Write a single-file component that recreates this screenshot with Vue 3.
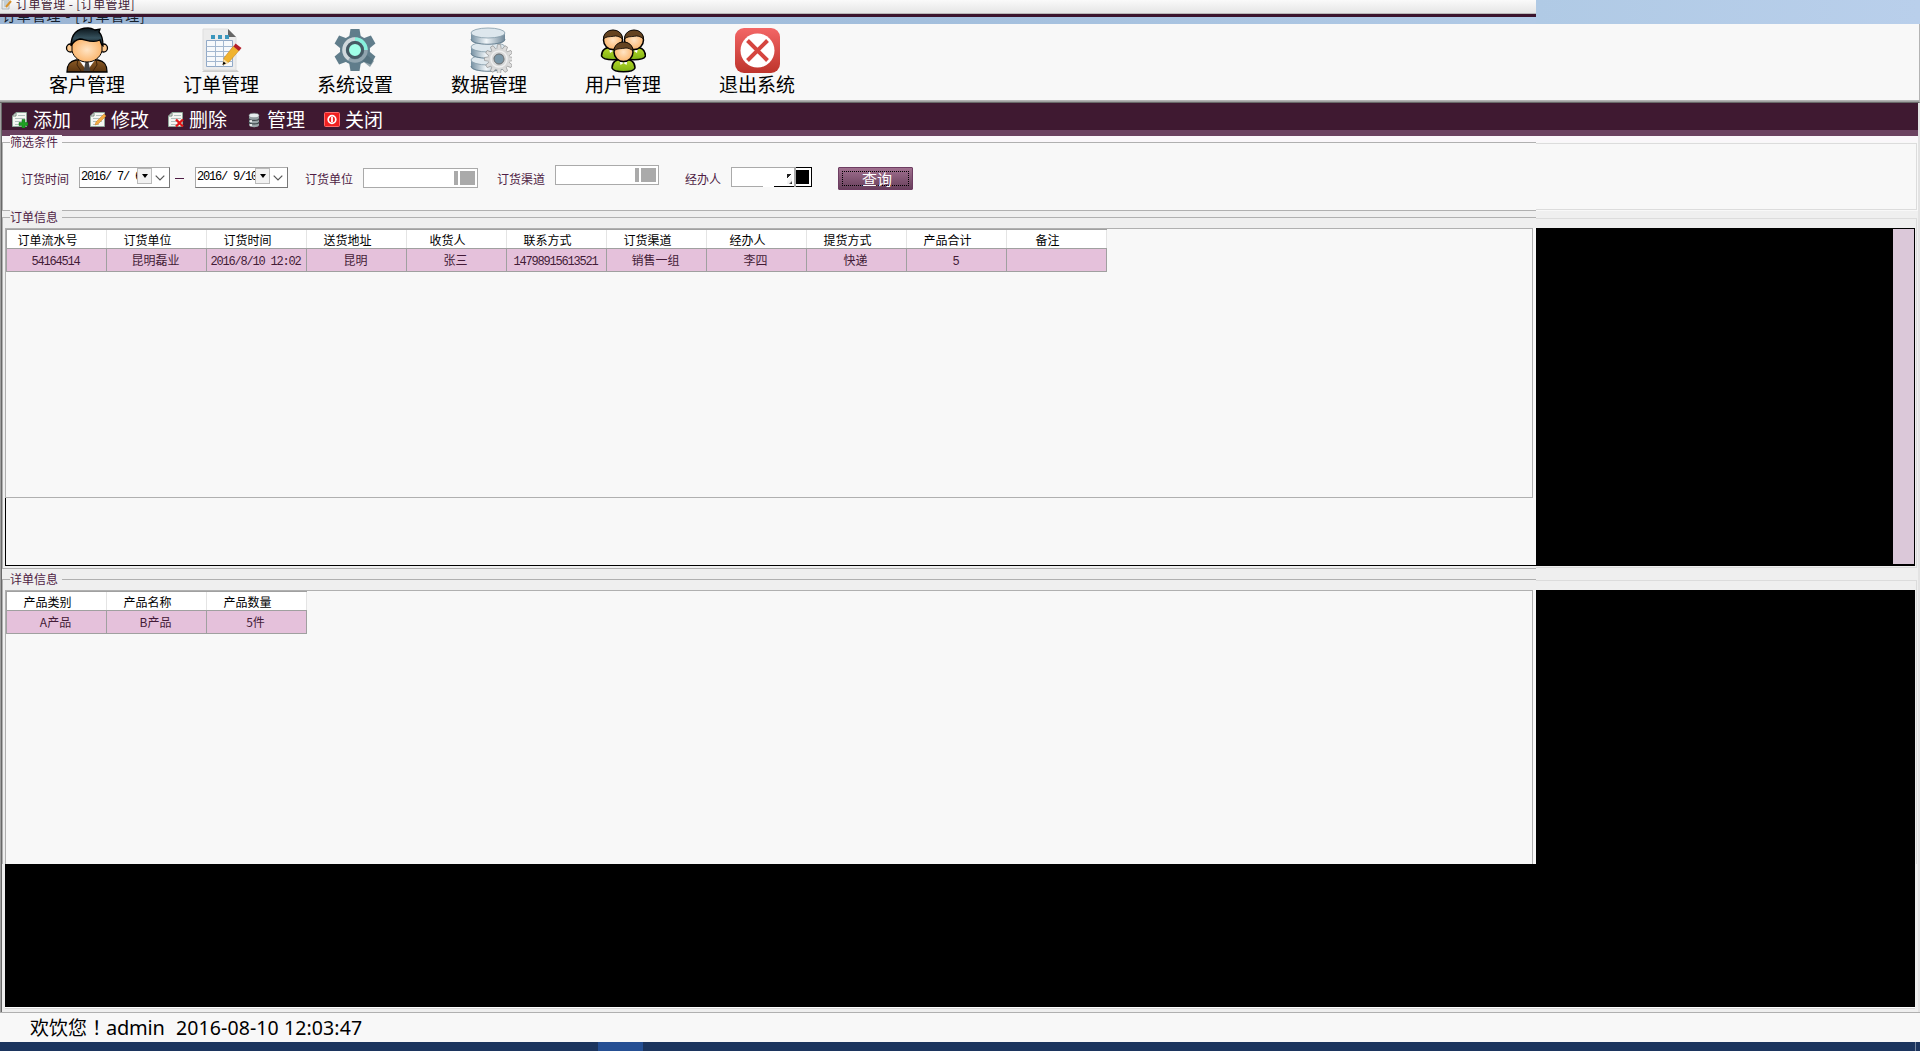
<script setup>
const nav = [
  { id: 'customer', label: '客户管理' },
  { id: 'order', label: '订单管理' },
  { id: 'setting', label: '系统设置' },
  { id: 'data', label: '数据管理' },
  { id: 'users', label: '用户管理' },
  { id: 'exit', label: '退出系统' }
]
const tools = [
  { id: 'add', label: '添加' },
  { id: 'edit', label: '修改' },
  { id: 'del', label: '删除' },
  { id: 'db', label: '管理' },
  { id: 'close', label: '关闭' }
]
const orderCols = ['订单流水号', '订货单位', '订货时间', '送货地址', '收货人', '联系方式', '订货渠道', '经办人', '提货方式', '产品合计', '备注']
const orderRow = ['54164514', '昆明磊业', '2016/8/10 12:02', '昆明', '张三', '14798915613521', '销售一组', '李四', '快递', '5', '']
const detailCols = ['产品类别', '产品名称', '产品数量']
const detailRow = ['A产品', 'B产品', '5件']
const isMono = (t) => /^[\x20-\x7e]+$/.test(t)
const teeth = [0, 60, 120, 180, 240, 300]
const cogs = [0, 30, 60, 90, 120, 150, 180, 210, 240, 270, 300, 330]
</script>

<template>
  <div class="app">
    <header class="top">
      <div class="caption">
        <div class="bar">
          <svg class="capicon" width="11" height="10" viewBox="0 0 11 10"><path d="M1 0h7v9H1z" fill="#e3e6e8" stroke="#9aa3a9" stroke-width=".7" /><path d="M3 2h4M3 4h4M3 6h3" stroke="#8fa9b8" stroke-width=".8" /><path d="M10 1L5 7" stroke="#d8922a" stroke-width="2" /></svg>
          <span class="captext">订单管理 - [订单管理]</span>
        </div>
        <div class="ghost"><span>订单管理 - [订单管理]</span></div>
      </div>
      <div class="sky"></div>
    </header>

    <nav class="ribbon">
      <div v-for="n in nav" :key="n.id" class="navitem">
        <svg width="46" height="46" viewBox="0 0 46 46">
          <defs>
            <linearGradient id="hair" x2="0" y2="1"><stop stop-color="#0b151b" /><stop offset=".55" stop-color="#35505c" /><stop offset="1" stop-color="#0a1015" /></linearGradient>
            <radialGradient id="skin"><stop stop-color="#ffe4c4" /><stop offset="1" stop-color="#fbb76f" /></radialGradient>
            <linearGradient id="suit" x2="0" y2="1"><stop stop-color="#8a5a26" /><stop offset="1" stop-color="#5b3510" /></linearGradient>
            <linearGradient id="drum"><stop stop-color="#7590a2" /><stop offset=".45" stop-color="#f2f7fa" /><stop offset="1" stop-color="#6f8798" /></linearGradient>
            <linearGradient id="green" x2="0" y2="1"><stop stop-color="#b9dc2c" /><stop offset="1" stop-color="#7eb012" /></linearGradient>
            <linearGradient id="red" x2="0" y2="1"><stop stop-color="#f36666" /><stop offset="1" stop-color="#be342c" /></linearGradient>
          </defs>
          <g v-if="n.id === 'customer'" stroke="#000" stroke-width="1.3">
            <path d="M3 45c0-8 3-11 9-12h22c6 1 9 4 9 12z" fill="url(#suit)" />
            <path d="M15 33l8 11 8-11z" fill="#fff" stroke="none" />
            <path d="M21.500 35h3l2 9h-7z" fill="#444" stroke="none" />
            <path d="M14 32l-1 6 4 6M32 32l1 6-4 6" fill="none" stroke="#3c220a" stroke-width="1" />
            <circle cx="6.500" cy="21" r="4" fill="#fdc88d" /><circle cx="39.500" cy="21" r="4" fill="#fdc88d" />
            <path d="M8 16c0-7 30-7 30 0v8c-2 7-8 11-15 11S10 31 8 24z" fill="url(#skin)" stroke-width="1" />
            <path d="M7 19C7 7 13 1 24 1c3 0 5 1 7 2l5-1-1 3c3 3 4 7 4 14-2-1-2-3-3-6-8 4-15-1-20-1-5 1-7 3-9 7z" fill="url(#hair)" />
          </g>
          <g v-else-if="n.id === 'order'">
            <path d="M6 43h33l2 2H4z" fill="#ccc" />
            <path d="M5 2h25l8 8v33H5z" fill="#ececec" stroke="#dedede" />
            <path d="M30 2l8 8h-8z" fill="#666" />
            <path d="M13 8h4v4h-4zM20 8h4v4h-4zM27 8h4v4h-4z" fill="#3c97bd" />
            <path d="M8.500 13.500h26v26h-26z" fill="#f7f9fb" stroke="#91a9c7" />
            <path d="M8.500 19.500h26M8.500 24.500h26M8.500 29.500h26M8.500 34.500h26M17.500 13.500v26M25.500 13.500v26" fill="none" stroke="#a4b8d0" />
            <path d="M35.500 19l5.500 4.500-10 11.500-6 3 1-7z" fill="#f0b32e" stroke="#c9871c" stroke-width=".6" />
            <path d="M25.500 32l5 4-5.500 2z" fill="#f6dfb0" /><path d="M25.500 34.500l2.500 2-3.500 1.500z" fill="#000" />
            <path d="M37.500 16.500l6 4.500-2.500 3-5.500-4.500z" fill="#b5202a" />
          </g>
          <g v-else-if="n.id === 'setting'">
            <path v-for="a in teeth" :key="a" d="M18.500 2h9l2 12h-13z" fill="#607d8b" :transform="`rotate(${a} 23 23)`" />
            <circle cx="23" cy="23" r="15" fill="#607d8b" />
            <path d="M28 32l10 8 4-6-7-6z" fill="#4f6b78" opacity=".6" />
            <circle cx="23" cy="23" r="11" fill="none" stroke="#90a4ae" stroke-width="3.500" />
            <path d="M12 23a11 11 0 0 1 11-11" fill="none" stroke="#cfd8dc" stroke-width="3.500" />
            <path d="M12 23a11 11 0 0 0 5 9" fill="none" stroke="#cfd8dc" stroke-width="3.500" />
            <path d="M23 12a11 11 0 0 1 11 11" fill="none" stroke="#86f0dc" stroke-width="3.500" />
            <circle cx="23" cy="23" r="7.500" fill="#a0ffe8" stroke="#455a64" stroke-width="3" />
          </g>
          <g v-else-if="n.id === 'data'">
            <g v-for="y in [28, 15, 1]" :key="y">
              <path :d="`M5 ${y + 5}v7c0 6 34 6 34 0v-7z`" fill="url(#drum)" />
              <ellipse cx="22" :cy="y + 5" rx="17" ry="5" fill="#dde7ed" stroke="#8299a7" stroke-width=".8" />
              <path :d="`M5 ${y + 11}c0 7 34 7 34 0`" fill="none" stroke="#688192" />
            </g>
            <g transform="translate(33 32)">
              <path v-for="a in cogs" :key="a" d="M-1.500-14.500h3l1 6h-5z" fill="#dcdcdc" stroke="#8a8a8a" stroke-width=".6" :transform="`rotate(${a})`" />
              <circle r="8" fill="none" stroke="#d7d7d7" stroke-width="5" />
              <circle r="5" fill="#7b97a8" stroke="#707070" /><circle r="8" fill="none" stroke="#efefef" stroke-width="1.500" />
            </g>
          </g>
          <g v-else-if="n.id === 'users'">
            <g v-for="p in [[13, 13], [34, 13], [23.5, 25]]" :key="p.join()" :transform="`translate(${p[0]} ${p[1]})`" stroke="#000" stroke-width="1.500">
              <path d="M-11.500 16c0-7 5-9 11.500-9s11.500 2 11.500 9c-2 5-21 5-23 0z" fill="url(#green)" />
              <path d="M-4 8l4 3 4-3-1 5-3-2-3 2z" fill="#fff" stroke="none" />
              <ellipse cy="0" rx="9.500" ry="9.500" fill="url(#skin)" />
              <path d="M-9.500-1c0-12 19-12 19 0-2-2-5-3-7-3-5 1-9 0-12 3z" fill="#644320" stroke-width=".8" />
            </g>
          </g>
          <g v-else>
            <rect x="1" y="1" width="45" height="45" rx="9" fill="url(#red)" />
            <circle cx="23.500" cy="23.500" r="17" fill="#fff" />
            <path d="M13.500 13.500l20 20M33.500 13.500l-20 20" stroke="#d5453f" stroke-width="4" />
          </g>
        </svg>
        <span>{{ n.label }}</span>
      </div>
    </nav>

    <main class="work">
      <div class="toolbar">
        <div v-for="t in tools" :key="t.id" class="tool">
          <svg width="16" height="16" viewBox="0 0 16 16">
            <g v-if="t.id === 'db'">
              <path d="M3 3v10c0 3 10 3 10 0V3z" fill="#9aa5a9" /><ellipse cx="8" cy="3.500" rx="5" ry="2.300" fill="#e6ecee" stroke="#6d777b" stroke-width=".6" />
              <path d="M3 6.500c0 2.500 10 2.500 10 0M3 10c0 2.500 10 2.500 10 0" fill="none" stroke="#3f494d" stroke-width="1.300" /><path d="M5 8v2M5 12v2" stroke="#fff" stroke-width="1.500" />
            </g>
            <g v-else-if="t.id === 'close'">
              <rect x=".5" y=".5" width="15" height="14" rx="1" fill="#f02020" stroke="#ff6a6a" /><circle cx="8" cy="7.500" r="3.800" fill="none" stroke="#fff" stroke-width="1.700" /><path d="M8 5v5" stroke="#fff" stroke-width="1.800" />
            </g>
            <g v-else>
              <path d="M4 .5h10.500v14H.500V4z" fill="#f4f6f2" stroke="#8fa79a" /><path d="M4 1v3H1" fill="none" stroke="#73877b" />
              <path d="M6 3.500h7M3 6.500h10M3 9.500h9M3 12.500h6" stroke="#b1c0bd" />
              <path v-if="t.id === 'add'" d="M10 7.500h3v3h3v3h-3V16h-3v-2.500H7v-3h3z" fill="#1e9e22" stroke="#0b6b12" stroke-width=".5" />
              <path v-if="t.id === 'edit'" d="M5 13l1-3 8-8 2 2-8 8z" fill="#f5ad43" stroke="#c97a1d" stroke-width=".5" />
              <path v-if="t.id === 'del'" d="M8 7.500l7 7M15 7.500l-7 7" stroke="#e01818" stroke-width="2.400" />
            </g>
          </svg>
          <span>{{ t.label }}</span>
        </div>
      </div>

      <section class="band filterband">
        <div class="group filter">
          <span class="legend">筛选条件</span>
          <div class="fields">
            <label class="l1">订货时间</label>
            <div class="date d1"><span>2016/ 7/ 6</span><i class="drop"></i><svg width="10" height="6" viewBox="0 0 10 6"><path d="M.7.7L5 5 9.300.7" fill="none" stroke="#555" stroke-width="1.200" /></svg></div>
            <i class="dash"></i>
            <div class="date d2"><span>2016/ 9/10</span><i class="drop"></i><svg width="10" height="6" viewBox="0 0 10 6"><path d="M.7.7L5 5 9.300.7" fill="none" stroke="#555" stroke-width="1.200" /></svg></div>
            <label class="l2">订货单位</label>
            <div class="combo c1"><i class="thin"></i><i class="block"></i></div>
            <label class="l3">订货渠道</label>
            <div class="combo c2"><i class="thin"></i><i class="block"></i></div>
            <label class="l4">经办人</label>
            <div class="combo c3"><div class="cleft"><i class="bit"></i></div><div class="cright"><i class="block"></i></div></div>
            <button class="query"><span>查询</span></button>
          </div>
        </div>
        <div class="rest"></div>
      </section>

      <section class="band orderband">
        <div class="group">
          <span class="legend">订单信息</span>
          <div class="list">
            <div class="table">
              <div class="row head"><span v-for="c in orderCols" :key="c">{{ c }}</span></div>
              <div class="row body"><span v-for="(c, i) in orderRow" :key="i"><b :class="{ mono: isMono(c) }">{{ c }}</b></span></div>
            </div>
          </div>
          <div class="under"></div>
        </div>
        <div class="rest"><div class="void"><i class="strip"></i></div></div>
      </section>

      <section class="band detailband">
        <div class="group">
          <span class="legend">详单信息</span>
          <div class="list">
            <div class="table">
              <div class="row head"><span v-for="c in detailCols" :key="c">{{ c }}</span></div>
              <div class="row body"><span v-for="c in detailRow" :key="c"><b>{{ c }}</b></span></div>
            </div>
          </div>
        </div>
        <div class="rest"><div class="void"></div></div>
      </section>
      <div class="pit"></div>
    </main>

    <footer class="status"><span class="hello">欢饮您<em>！</em></span><span class="who">admin</span><span class="clock">2016-08-10 12:03:47</span></footer>
    <div class="taskbar"><i class="active"></i><i class="peek"></i></div>
  </div>
</template>

<style>
body { margin: 0; overflow: hidden; }
</style>

<style scoped>
* { box-sizing: border-box; }
.app { width: 1920px; height: 1051px; display: flex; flex-direction: column; background: #f8f8f8; color: #000; font: 12px/14px "Noto Sans CJK SC", sans-serif; overflow: hidden; white-space: nowrap; }
i { display: block; font-style: normal; flex: none; }
b { font-weight: 400; }

.top { display: flex; height: 24px; }
.caption { width: 1536px; }
.bar { height: 17px; display: flex; background: linear-gradient(#fafafa, #e7e7e7 12px, #e7e7e7 13px, #b9b9b9 13px, #b9b9b9 14px, #3b142d 14px); overflow: hidden; }
.capicon { margin: 0 0 0 1px; }
.captext { margin: -4px 0 0 4px; font-size: 12px; line-height: 16px; color: #431b37; height: 16px; letter-spacing: .4px; }
.ghost { height: 7px; overflow: hidden; background: linear-gradient(90deg, #9bb5d4, #a3bfdd 60%, #b1cae6); }
.ghost span { display: block; margin: -10px 0 0 2px; font-size: 14px; line-height: 16px; color: #15202c; letter-spacing: .85px; }
.sky { flex: 1; background: linear-gradient(90deg, #b0cae5, #b9cfeb); }

.ribbon { display: flex; height: 79px; padding-left: 20px; border-bottom: 1px solid #696969; background: linear-gradient(#f8f8f8 76px, #b4b4b4 76px, #b4b4b4 77px, #a0a0a0 77px); border-right: 1px solid #b4b4b4; }
.navitem { width: 134px; display: flex; flex-direction: column; align-items: center; padding-top: 3px; }
.navitem span { font-size: 19px; line-height: 26px; margin-top: -2px; }

.work { height: 909px; border-left: 1px solid #a0a0a0; background: #efefef; box-shadow: inset 1px 0 #696969, inset -2px 0 #e3e3e3; padding-left: 1px; }
.toolbar { height: 33px; width: 1916px; display: flex; padding-left: 10px; background: #3f1931; border-bottom: 6px solid #6b4260; }
.tool { width: 78px; display: flex; color: #fff; font-size: 19px; font-weight: 400; line-height: 32px; }
.tool svg { margin: 9px 5px 0 0; flex: none; }

.band { display: flex; }
.group { width: 1534px; border: solid #b0b0b0; border-width: 1px 0 1px 1px; }
.legend { display: block; width: 52px; height: 14px; margin: -8px 0 -6px 7px; line-height: 14px; color: #4f1d45; position: relative; background: #efefef; }
.rest { width: 381px; border: solid #dcdcdc; border-width: 1px 1px 1px 0; }
.filterband { height: 75px; background: #f8f8f8; padding-top: 6px; box-shadow: inset 0 6px #faf7fa; width: 1916px; }
.filterband .legend { background: #f9f8f9; }
.filterband .rest { margin: 1px 0; height: 67px; }

.fields { display: flex; align-items: flex-start; color: #4f1d45; padding-top: 24px; }
.fields label { margin: 5px 0 0 -1px; width: 49px; flex: none; }
.fields .l1 { margin-left: 18px; }
.date { height: 21px; border: 1px solid #777; border-top-color: #aaa; border-left-color: #aaa; background: #fff; color: #000; display: flex; flex: none; overflow: hidden; }
.date span { width: 57px; padding-left: 1px; overflow: hidden; white-space: pre; font: 12px/19px "Liberation Mono", monospace; letter-spacing: -1.2px; }
.date svg { margin: 7px 0 0 3px; }
.d1 { width: 91px; margin-left: 9px; }
.d2 { width: 93px; margin-left: 11px; }
.d2 span { width: 59px; }
.drop { width: 15px; height: 16px; border: 1px solid #bbb; background: #f2f2f2; display: flex; justify-content: center; }
.drop::after { content: ""; margin-top: 5px; height: 0; border: 3px solid transparent; border-top: 4px solid #000; border-bottom: 0; }
.dash { width: 9px; height: 1px; margin: 11px 0 0 5px; background: #4f1d45; }
.fields .l2 { margin-left: 17px; }
.combo { background: #fff; border: 1px solid #aaa; height: 20px; display: flex; justify-content: flex-end; flex: none; }
.thin { width: 4px; height: 14px; background: #aaa; margin: 2px 2px 0 0; }
.block { width: 15px; height: 14px; background: #aaa; margin: 2px 2px 0 0; }
.c1 { width: 115px; margin: 1px 0 0 9px; }
.fields .l3 { margin-left: 19px; }
.c2 { width: 104px; margin: -2px 0 0 9px; }
.fields .l4 { margin-left: 26px; width: 37px; }
.c3 { width: 81px; margin-left: 9px; border: 0; justify-content: flex-start; }
.cleft { width: 65px; height: 20px; border: 1px solid #aaa; border-bottom: 0; background: linear-gradient(90deg, #aaa 31px, #fff 31px, #fff 42px, #000 42px) bottom / 100% 1px no-repeat #fff; border-right: 2px solid #aaa; display: flex; justify-content: flex-end; }
.bit { width: 5px; height: 10px; margin: 6px 2px 0 0; background: linear-gradient(135deg, #222 30%, #fff 30%, #eee 75%, #222 90%); }
.cright { width: 16px; height: 20px; border: 1px solid #000; border-left: 0; }
.cright .block { width: 13px; background: #000; margin: 2px 0 0; }
.query { width: 75px; height: 23px; margin: 0 0 0 26px; padding: 3px; border: 1px solid #6e3d62; border-radius: 1px; background: linear-gradient(#a0708f, #683f5c); color: #fff; display: flex; flex: none; }
.query span { flex: 1; border: 1px dotted #000; font: 15px/13px "Noto Sans CJK SC", sans-serif; text-align: center; padding-left: 3px; }

.orderband { margin-top: 6px; height: 352px; }
.orderband .rest { margin-top: 1px; height: 350px; }
.void { height: 338px; margin-top: 9px; background: #000; width: 379px; display: flex; justify-content: flex-end; padding: 1px 1px 2px; }
.strip { width: 21px; background: #dbc8d9; }
.list { margin: 10px 3px 0 2px; height: 270px; border: 1px solid #b0b0b0; background: #f8f8f8; box-shadow: 3px 0 #f8f8f8; }
.under { margin-left: 2px; height: 68px; border: solid #000; border-width: 0 0 1px 1px; background: #f8f8f8; }
.table { width: max-content; border-top: 1px solid #a0a0a0; }
.row { display: flex; }
.row span { width: 100px; text-align: center; border-right: 1px solid #a0a0a0; }
.row span:first-child { width: 101px; border-left: 1px solid #a0a0a0; }
.head { background: #fff; height: 19px; border-bottom: 1px solid #a0a0a0; }
.row.head span { line-height: 19px; padding-right: 18px; border-right-color: #e4e4e4; height: 18px; overflow: hidden; }
.row.body span { height: 23px; line-height: 22px; background: #e5c1db; border-bottom: 1px solid #a0a0a0; color: #431b37; padding-right: 2px; }
.mono { font: 12px/22px "Liberation Mono", monospace; letter-spacing: -1.2px; }

.detailband { margin-top: 10px; height: 285px; }
.detailband .group { border-bottom: 0; }
.detailband .list { height: 274px; border-bottom: 0; }
.detailband .rest { margin-top: 1px; border-bottom: 0; }
.detailband .void { height: 274px; }
.pit { margin-left: 3px; width: 1910px; height: 143px; background: #000; box-shadow: 0 1px #fff, 0 2px #d9d9d9; }

.status { height: 30px; display: flex; border-top: 1px solid #b0b0b0; background: #f8f8f8; font: 19px/28px "Noto Sans CJK SC", sans-serif; padding-left: 30px; }
.hello { width: 76px; }
.hello em { font-style: normal; margin-left: 5px; }
.who { width: 70px; font: 20px/29px "Noto Sans", sans-serif; letter-spacing: -.2px; }
.clock { font: 19.500px/29px "Noto Sans", sans-serif; letter-spacing: .1px; }
.taskbar { height: 9px; background: #1c355e; display: flex; justify-content: space-between; padding: 0 4px 0 598px; }
.active { width: 45px; height: 9px; background: #254f93; }
.peek { width: 1px; height: 9px; background: #7586a0; }
</style>
